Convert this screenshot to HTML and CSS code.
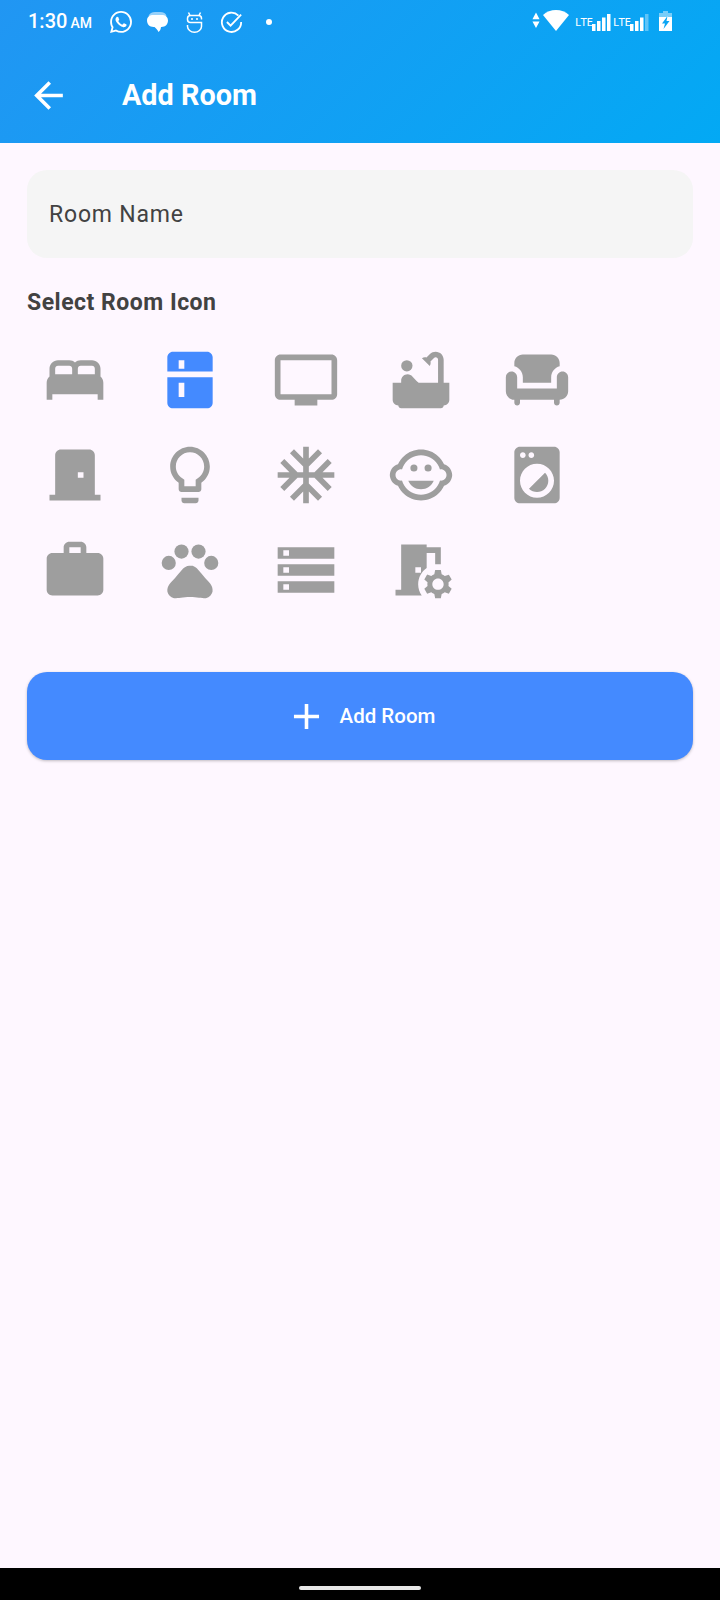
FILE: index.html
```html
<!DOCTYPE html>
<html lang="en">
<head>
<meta charset="utf-8">
<title>Add Room</title>
<link rel="stylesheet" href="styles.css">
</head>
<body>
<div class="phone">
  <header class="appbar">
    <div class="status">
      <div class="status-left">
        <span class="clock">1:30<small>AM</small></span>
        <svg class="si wa" viewBox="0 0 24 24"><path d="M17.472 14.382c-.297-.149-1.758-.867-2.03-.967-.273-.099-.471-.148-.67.15-.197.297-.767.966-.94 1.164-.173.199-.347.223-.644.075-.297-.15-1.255-.463-2.39-1.475-.883-.788-1.48-1.761-1.653-2.059-.173-.297-.018-.458.13-.606.134-.133.298-.347.446-.52.149-.174.198-.298.298-.497.099-.198.05-.371-.025-.52-.075-.149-.669-1.612-.916-2.207-.242-.579-.487-.5-.669-.51-.173-.008-.371-.01-.57-.01-.198 0-.52.074-.792.372-.272.297-1.04 1.016-1.04 2.479 0 1.462 1.065 2.875 1.213 3.074.149.198 2.096 3.2 5.077 4.487.709.306 1.262.489 1.694.625.712.227 1.36.195 1.871.118.571-.085 1.758-.719 2.006-1.413.248-.694.248-1.289.173-1.413-.074-.124-.272-.198-.57-.347m-5.421 7.403h-.004a9.87 9.87 0 01-5.031-1.378l-.361-.214-3.741.982.998-3.648-.235-.374a9.86 9.86 0 01-1.51-5.26c.001-5.45 4.436-9.884 9.888-9.884 2.64 0 5.122 1.03 6.988 2.898a9.825 9.825 0 012.893 6.994c-.003 5.45-4.437 9.884-9.885 9.884m8.413-18.297A11.815 11.815 0 0012.05 0C5.495 0 .16 5.335.157 11.892c0 2.096.547 4.142 1.588 5.945L.057 24l6.305-1.654a11.882 11.882 0 005.683 1.448h.005c6.554 0 11.89-5.335 11.893-11.893a11.821 11.821 0 00-3.48-8.413z"/></svg>
        <svg class="si msg" viewBox="0 0 21 20"><path opacity=".55" d="M8 0h5c3.500 0 6 1.500 6.500 4H1.500C2.500 1.500 5 0 8 0z"/><path d="M6.500 3h8C18.300 3 21 4.800 21 8.500S18.300 15 14.500 15H14c-.2 2-1 4-2.500 5-.6-1.500-2.200-3.500-4-5H6.500C2.700 15 0 12.200 0 8.500S2.700 3 6.500 3z"/></svg>
        <svg class="si bot" viewBox="0 0 17 21" fill="none" stroke="#fff" stroke-width="1.500"><path d="M2.500 .5 4 3.500M14.500 .5 13 3.500"/><path d="M15.500 7.500V6.500Q15.500 3.500 12.500 3.500H4.500Q1.500 3.500 1.500 6.500V7.500Q1.500 10.500 4.500 10.500H15.500V14.500A7 5.700 0 0 1 1.500 14.500V13"/><circle cx="6" cy="7" r="1" fill="#fff" stroke="none"/><circle cx="11" cy="7" r="1" fill="#fff" stroke="none"/></svg>
        <svg class="si chk" viewBox="0 0 24 24" fill="none" stroke="#fff" stroke-width="2"><path d="M19.500 5A10.500 10.500 0 1 0 22.500 12"/><path d="m7 12 4 4L22.500 4"/></svg>
        <span class="dot"></span>
      </div>
      <div class="status-right">
        <svg class="arrows" viewBox="0 0 9 18"><path d="M4.500 0 8.500 7.500H.5zM.5 10h8l-4 7.500z"/></svg>
        <svg class="wifi" viewBox="0 0 26 21"><path d="M13 0c5 0 9.500 1.800 13 5L13 21 0 5C3.500 1.800 8 0 13 0z"/></svg>
        <span class="lte">LTE</span>
        <svg class="bars" viewBox="0 0 19 17"><path d="M0 10h3.500v7H0zM5 7h3.500v10H5zM10 3.500h3.500V17H10zM15 0h3.500v17H15z"/></svg>
        <span class="lte">LTE</span>
        <svg class="bars" viewBox="0 0 19 17"><path d="M0 10h3.500v7H0zM5 7h3.500v10H5zM10 3.500h3.500V17H10z"/><path opacity=".35" d="M15 0h3.500v17H15z"/></svg>
        <svg class="batt" viewBox="0 0 13 20"><path opacity=".45" d="M4 0h5v2h4v4H0V2h4z"/><path fill-rule="evenodd" d="M0 6h13v14H0zM8.500 5 3 12.500h3L4.500 18 10.500 10H7.500z"/></svg>
      </div>
    </div>
    <div class="toolbar">
      <svg class="back" viewBox="0 0 24 24"><path d="M20 11H7.830l5.590-5.590L12 4l-8 8 8 8 1.410-1.410L7.830 13H20v-2z"/></svg>
      <h1 class="title">Add Room</h1>
    </div>
  </header>

  <main class="content">
    <div class="field">Room Name</div>
    <h2 class="label">Select Room Icon</h2>
    <div class="icons">
      <svg class="ic" viewBox="0 0 24 24"><path d="M21 10.780V8c0-1.650-1.350-3-3-3h-4c-.77 0-1.470.3-2 .78-.53-.48-1.230-.78-2-.78H6C4.350 5 3 6.350 3 8v2.780c-.61.55-1 1.340-1 2.220v6h2v-2h16v2h2v-6c0-.88-.39-1.670-1-2.220zM14 7h4c.55 0 1 .45 1 1v2h-6V8c0-.55.45-1 1-1zM5 8c0-.55.45-1 1-1h4c.55 0 1 .45 1 1v2H5V8z"/></svg>
      <svg class="ic on" viewBox="0 0 24 24"><path d="M20 9V4c0-1.100-.9-2-2-2H6c-1.100 0-2 .9-2 2v5h16zM8 5h2v3H8V5zM4 20c0 1.100.9 2 2 2h12c1.100 0 2-.9 2-2v-9.010H4V20zm4-7h2v5H8v-5z"/></svg>
      <svg class="ic" viewBox="0 0 24 24"><path d="M21 3H3c-1.100 0-2 .9-2 2v12c0 1.100.9 2 2 2h5v2h8v-2h5c1.100 0 1.990-.9 1.990-2L23 5c0-1.100-.9-2-2-2zm0 14H3V5h18v12z"/></svg>
      <svg class="ic" viewBox="0 0 24 24"><circle cx="7" cy="7" r="2"/><path d="M20 13V4.830C20 3.270 18.730 2 17.170 2c-.75 0-1.470.3-2 .83l-1.250 1.250c-.16-.05-.33-.08-.51-.08-.4 0-.77.12-1.080.32l2.760 2.760c.2-.31.32-.68.32-1.080 0-.18-.03-.34-.07-.5l1.250-1.250c.15-.15.36-.24.58-.24.47 0 .85.38.85.85V13h-6.850c-.3-.21-.57-.45-.82-.72l-1.400-1.550c-.19-.21-.43-.38-.69-.5-.31-.15-.65-.23-1-.23C6 10.010 5 11.010 5 12.250V13H2v6c0 1.100.9 2 2 2 0 .55.45 1 1 1h14c.55 0 1-.45 1-1 1.100 0 2-.9 2-2v-6h-2z"/></svg>
      <svg class="ic" viewBox="0 0 24 24"><path d="M7 11v2h10v-2c0-1.860 1.280-3.410 3-3.860V6c0-1.650-1.350-3-3-3H7C5.350 3 4 4.350 4 6v1.140c1.720.45 3 2 3 3.860z"/><path d="M21 9c-1.100 0-2 .9-2 2v4H5v-4c0-1.100-.9-2-2-2s-2 .9-2 2v5c0 1.650 1.350 3 3 3v1c0 .55.45 1 1 1s1-.45 1-1v-1h12v1c0 .55.45 1 1 1s1-.45 1-1v-1c1.650 0 3-1.350 3-3v-5c0-1.100-.9-2-2-2z"/></svg>

      <svg class="ic" viewBox="0 0 24 24"><path d="M19 19V5c0-1.100-.9-2-2-2H7c-1.100 0-2 .9-2 2v14H3v2h18v-2h-2zm-4-6h-2v-2h2v2z"/></svg>
      <svg class="ic" viewBox="0 0 24 24"><path d="M9 21c0 .55.45 1 1 1h4c.55 0 1-.45 1-1v-1H9v1zm3-19C8.140 2 5 5.140 5 9c0 2.380 1.190 4.470 3 5.740V17c0 .55.45 1 1 1h6c.55 0 1-.45 1-1v-2.260c1.810-1.270 3-3.360 3-5.740 0-3.860-3.140-7-7-7zm2.850 11.100l-.85.6V16h-4v-2.300l-.85-.6C7.800 12.160 7 10.630 7 9c0-2.760 2.240-5 5-5s5 2.240 5 5c0 1.630-.8 3.160-2.150 4.100z"/></svg>
      <svg class="ic" viewBox="0 0 24 24"><path d="M22 11h-4.170l3.240-3.240-1.410-1.420L15 11h-2V9l4.660-4.660-1.420-1.410L13 6.170V2h-2v4.170L7.760 2.930 6.340 4.340 11 9v2H9L4.340 6.340 2.930 7.760 6.170 11H2v2h4.170l-3.240 3.240 1.410 1.420L9 13h2v2l-4.660 4.660 1.420 1.410L11 17.830V22h2v-4.170l3.240 3.240 1.420-1.410L13 15v-2h2l4.660 4.660 1.410-1.420L17.830 13H22z"/></svg>
      <svg class="ic" viewBox="0 0 24 24"><circle cx="14.500" cy="9.500" r="1.250"/><circle cx="9.500" cy="9.500" r="1.250"/><path d="M22.940 12.660c.04-.21.06-.43.06-.66s-.02-.45-.06-.66c-.25-1.510-1.360-2.740-2.810-3.170-.53-1.120-1.280-2.100-2.190-2.910C16.360 3.850 14.280 3 12 3s-4.360.85-5.940 2.260c-.92.81-1.670 1.800-2.190 2.910-1.450.43-2.560 1.650-2.810 3.170-.04.21-.06.43-.06.66s.02.45.06.66c.25 1.510 1.360 2.740 2.810 3.170.52 1.110 1.270 2.090 2.170 2.890C7.620 20.140 9.710 21 12 21s4.380-.86 5.970-2.280c.9-.8 1.650-1.790 2.170-2.890 1.440-.43 2.550-1.650 2.800-3.170zM19 14c-.1 0-.19-.02-.29-.03-.2.67-.49 1.290-.86 1.860C16.600 17.740 14.450 19 12 19s-4.600-1.260-5.850-3.170c-.37-.57-.66-1.190-.86-1.860-.1.01-.19.03-.29.03-1.100 0-2-.9-2-2s.9-2 2-2c.1 0 .19.02.29.03.2-.67.49-1.290.86-1.860C7.400 6.260 9.550 5 12 5s4.600 1.260 5.850 3.170c.37.57.66 1.190.86 1.860.1-.01.19-.03.29-.03 1.100 0 2 .9 2 2s-.9 2-2 2zM7.500 14c.76 1.770 2.490 3 4.500 3s3.740-1.230 4.500-3h-9z"/></svg>
      <svg class="ic" viewBox="0 0 24 24"><path d="M9.170 16.830c1.560 1.560 4.100 1.560 5.660 0 1.560-1.560 1.560-4.100 0-5.660l-5.660 5.660zM18 2.010L6 2c-1.110 0-2 .89-2 2v16c0 1.110.89 2 2 2h12c1.110 0 2-.89 2-2V4c0-1.110-.89-1.990-2-1.990zM10 4c.55 0 1 .45 1 1s-.45 1-1 1-1-.45-1-1 .45-1 1-1zM7 4c.55 0 1 .45 1 1s-.45 1-1 1-1-.45-1-1 .45-1 1-1zm5 16c-3.310 0-6-2.690-6-6s2.690-6 6-6 6 2.690 6 6-2.690 6-6 6z"/></svg>

      <svg class="ic" viewBox="0 0 24 24"><path d="M20 6h-4V4c0-1.110-.89-2-2-2h-4c-1.110 0-2 .89-2 2v2H4c-1.110 0-1.990.89-1.990 2L2 19c0 1.110.89 2 2 2h16c1.110 0 2-.89 2-2V8c0-1.110-.89-2-2-2zm-6 0h-4V4h4v2z"/></svg>
      <svg class="ic" viewBox="0 0 24 24"><circle cx="4.500" cy="9.500" r="2.500"/><circle cx="9" cy="5.500" r="2.500"/><circle cx="15" cy="5.500" r="2.500"/><circle cx="19.500" cy="9.500" r="2.500"/><path d="M17.340 14.860c-.87-1.020-1.600-1.890-2.480-2.910-.46-.54-1.050-1.080-1.750-1.320-.11-.04-.22-.07-.33-.09-.25-.04-.52-.04-.78-.04s-.53 0-.79.05c-.11.02-.22.05-.33.09-.7.24-1.280.78-1.750 1.320-.87 1.020-1.600 1.890-2.480 2.910-1.310 1.310-2.920 2.760-2.620 4.790.29 1.020 1.020 2.030 2.330 2.320.73.15 3.060-.44 5.540-.44h.18c2.480 0 4.810.58 5.540.44 1.310-.29 2.040-1.310 2.330-2.320.31-2.040-1.300-3.490-2.610-4.800z"/></svg>
      <svg class="ic" viewBox="0 0 24 24"><path d="M2 20h20v-4H2v4zm2-3h2v2H4v-2zM2 4v4h20V4H2zm4 3H4V5h2v2zm-4 7h20v-4H2v4zm2-3h2v2H4v-2z"/></svg>
      <svg class="ic" viewBox="0 0 24 24"><path d="M14 11.260V6h3v4h2V4h-5V3H5v16H3v2h9.260c-.79-1.130-1.260-2.510-1.260-4 0-2.380 1.190-4.470 3-5.740zM10 11h2v2h-2v-2zm11.690 5.370l1.140-1-1-1.730-1.450.49c-.32-.27-.68-.48-1.080-.63L19 12h-2l-.3 1.490c-.4.15-.76.36-1.080.63l-1.450-.49-1 1.730 1.140 1c-.08.5-.08.76 0 1.260l-1.140 1 1 1.730 1.450-.49c.32.27.68.48 1.080.63L17 22h2l.3-1.490c.4-.15.76-.36 1.080-.63l1.450.49 1-1.730-1.140-1c.08-.51.08-.77 0-1.270zM18 19c-1.100 0-2-.9-2-2s.9-2 2-2 2 .9 2 2-.9 2-2 2z"/></svg>
    </div>
    <button class="add" type="button">
      <svg class="plus" viewBox="0 0 24 24"><path d="M19 13h-6v6h-2v-6H5v-2h6V5h2v6h6v2z"/></svg>
      <span>Add Room</span>
    </button>
  </main>

  <footer class="navbar"><span class="handle"></span></footer>
</div>
</body>
</html>
```

FILE: styles.css
```css
* { box-sizing: border-box; }
html, body { margin: 0; padding: 0; }
body { font-family: Roboto, "Noto Sans", sans-serif; background: #fef7ff; }
.phone { width: 720px; height: 1600px; display: flex; flex-direction: column; overflow: hidden; }

.appbar { height: 143px; background: linear-gradient(135deg, #2196f3 0%, #03a9f4 100%); color: #fff; display: flex; flex-direction: column; flex: none; }
.status { height: 42px; display: flex; justify-content: space-between; align-items: flex-start; padding: 10px 48px 0 28px; }
.status-left, .status-right { display: flex; align-items: center; fill: #fff; }
.clock { font-size: 20px; font-weight: 500; line-height: 22px; width: 82px; white-space: nowrap; }
.clock small { font-size: 14px; margin-left: 3px; }
.si { height: 22px; flex: none; }
.wa { width: 22px; margin-right: 15px; }
.msg { width: 21px; height: 20px; margin-right: 18px; }
.bot { width: 17px; height: 21px; margin-right: 17px; }
.chk { width: 23px; margin-right: 23px; }
.dot { width: 6px; height: 6px; border-radius: 50%; background: #fff; }
.arrows { width: 8px; height: 17px; margin-right: 3px; }
.wifi { width: 26px; height: 21px; margin-right: 6px; }
.lte { font-size: 11.500px; line-height: 12px; width: 17px; margin-top: 2px; letter-spacing: -.3px; font-family: "Noto Sans", Roboto, sans-serif; }
.bars { width: 19px; height: 17px; margin-top: 4px; margin-right: 2px; }
.batt { width: 13px; height: 20px; margin-left: 8px; }

.toolbar { flex: 1; display: flex; align-items: center; padding: 5px 0 0 27px; }
.back { width: 43px; height: 43px; fill: #fff; flex: none; }
.title { margin: 0 0 0 52px; font-size: 28.800px; font-weight: 700; line-height: 34px; }

.content { flex: 1; padding: 27px 27px 0; display: flex; flex-direction: column; }
.field { height: 88px; background: #f5f5f5; border-radius: 20px; padding: 0 22px; display: flex; align-items: center; font-size: 23px; letter-spacing: .8px; color: #424242; }
.label { margin: 31px 0 0; font-size: 23px; line-height: 28px; font-weight: 700; letter-spacing: .5px; color: #424242; }
.icons { display: grid; grid-template-columns: repeat(5, 68px); column-gap: 47.600px; row-gap: 27px; padding: 29px 0 0 13.700px; }
.ic { width: 68px; height: 68px; fill: #9e9e9e; display: block; }
.ic.on { fill: #448aff; }
.add { margin-top: 68px; height: 88px; width: 100%; border: 0; border-radius: 20px; background: #448aff; color: #fff; display: flex; align-items: center; justify-content: center; gap: 12px; font-family: inherit; font-size: 20.500px; font-weight: 500; box-shadow: 0 1px 3px rgba(0,0,0,.25); }
.plus { width: 43px; height: 43px; fill: #fff; }

.navbar { height: 32px; flex: none; background: #000; display: flex; justify-content: center; padding-top: 18px; }
.handle { width: 122px; height: 4px; border-radius: 2px; background: #e8e8e8; }
```
